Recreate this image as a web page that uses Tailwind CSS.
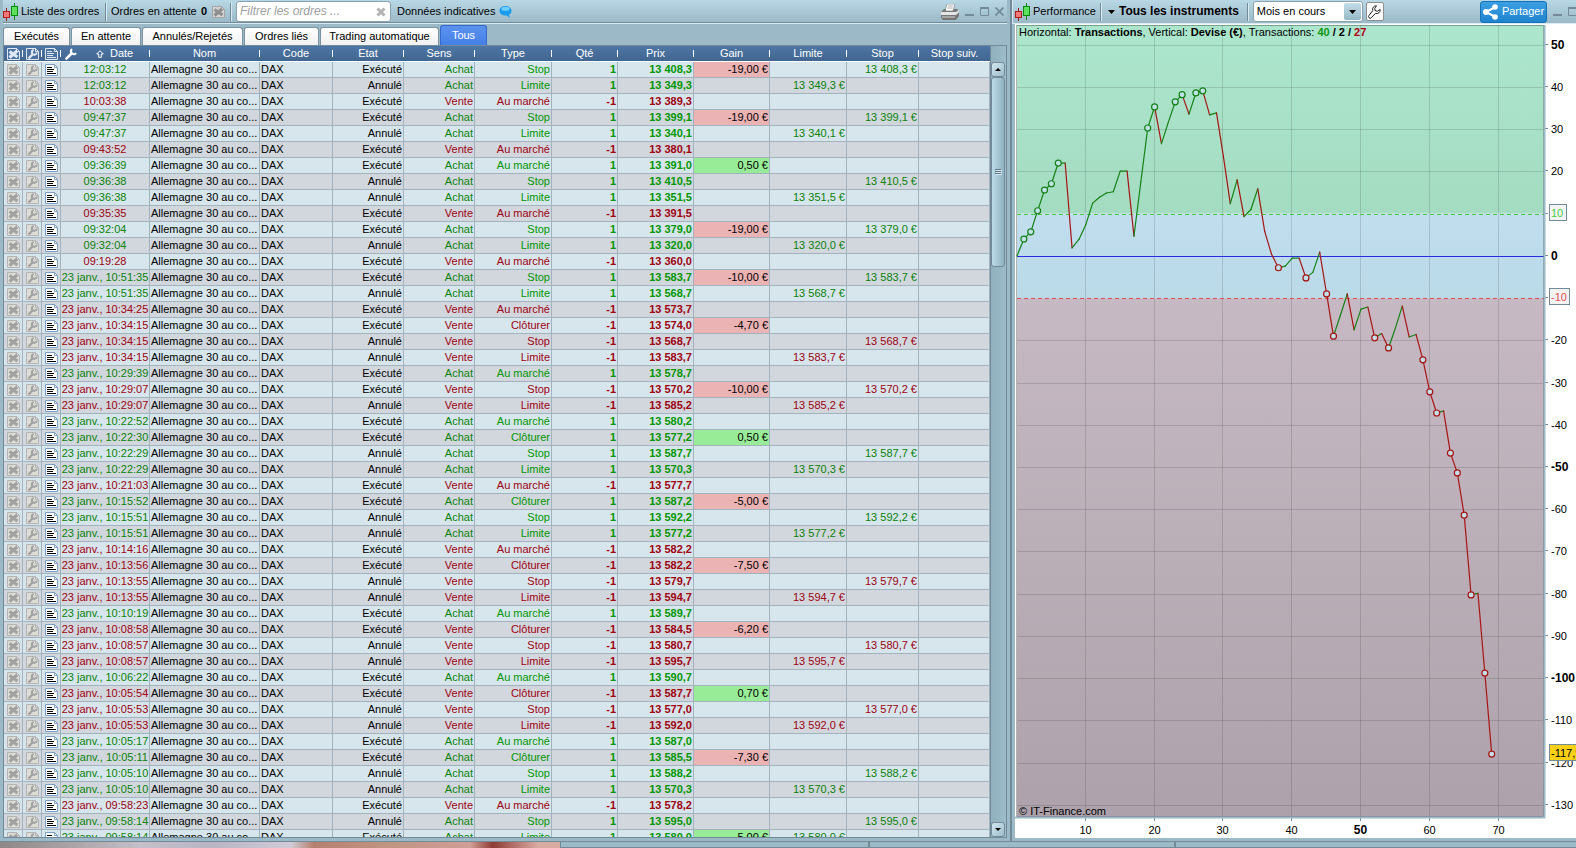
<!DOCTYPE html>
<html lang="fr">
<head>
  <meta charset="UTF-8" />
  <meta name="viewport" content="width=device-width, initial-scale=1.0" />
  <title>Liste des ordres</title>
  <script src="https://cdn.jsdelivr.net/npm/@tailwindcss/browser@4"></script>
</head>
<body class="h-screen flex flex-col overflow-hidden bg-[#9bb9c7] font-['Liberation_Sans',Arial,sans-serif] text-[11px] leading-[15px] text-black">

  <!-- Shared icons -->
  <svg class="hidden">
    <symbol id="candles" viewBox="0 0 16 18">
      <path d="M3.5 5v13" stroke="#a01818" />
      <rect x=".5" y="8.500" width="6" height="6" fill="#f07878" stroke="#b01c1c" />
      <path d="M11.500 0v17" stroke="#0a8a0a" />
      <rect x="8.500" y="3.500" width="6" height="9" fill="#5fe05f" stroke="#0a8a0a" />
    </symbol>
    <symbol id="cross" viewBox="0 0 13 12">
      <path d="M.5.500h9l3 3v8H.5z" fill="var(--paper)" stroke="var(--edge)" />
      <path d="M9.500.500v3h3" fill="none" stroke="var(--edge)" />
      <path d="M2.500 3.500l8 5.500M10 3L2.500 9.500" stroke="var(--ink)" stroke-width="3.200" />
    </symbol>
    <symbol id="spanner" viewBox="0 0 13 12">
      <path d="M.5.500h9l3 3v8H.5z" fill="var(--paper)" stroke="var(--edge)" />
      <path d="M9.500.500v3h3" fill="none" stroke="var(--edge)" />
      <path d="M2.500 10.500L7 6" stroke="var(--ink)" stroke-width="2.400" />
      <path d="M10.700 4.500A2.400 2.400 0 1 1 7.800 2" fill="none" stroke="var(--ink)" stroke-width="2" />
    </symbol>
    <symbol id="sheet" viewBox="0 0 13 12">
      <path d="M.5.500h9l3 3v8H.5z" fill="var(--paper)" stroke="var(--edge)" />
      <path d="M9.500.500v3h3" fill="none" stroke="var(--edge)" />
      <path d="M2 3.500h5M2 5.500h7M2 7.500h6M2 9.500h9" stroke="var(--ink)" />
    </symbol>
    <symbol id="wrench" viewBox="0 0 13 13">
      <path d="M1.500 11.500l5-5" stroke="currentColor" stroke-width="2.800" stroke-linecap="round" />
      <path d="M7.500 1a3 3 0 1 0 4.600 4.600" fill="none" stroke="currentColor" stroke-width="2.200" />
    </symbol>
  </svg>

  <main class="flex-1 min-h-0 grid grid-cols-[1010fr_566fr] border-b border-[#738b98]">

    <!-- Orders window -->
    <section class="min-w-0 min-h-0 flex flex-col pl-[3px] pr-[3px] pb-[3px]">
      <header class="h-6 shrink-0 flex items-center border-b border-[#d8eaf2] bg-linear-to-b from-[#b9d8e5] to-[#9ab8c6] whitespace-nowrap">
        <svg class="w-4 h-[18px]"><use href="#candles" /></svg>
        <h1 class="ml-[2px] w-[84px]">Liste des ordres</h1>
        <i class="w-[2px] h-[18px] border-l border-[#738b98] bg-[#d8eaf2]"></i>
        <span class="ml-1 w-[86px]">Ordres en attente</span>
        <b class="ml-1 w-2">0</b>
        <button class="ml-[3px] [--paper:#d5d5d5] [--edge:#a5a5a5] [--ink:#8e8e8e]" aria-label="Annuler les ordres">
          <svg class="w-[13px] h-3"><use href="#cross" /></svg>
        </button>
        <i class="ml-[5px] w-[2px] h-[18px] border-l border-[#738b98] bg-[#d8eaf2]"></i>
        <label class="ml-1 w-[155px] h-[21px] flex items-center rounded-[3px] border border-[#8ba2ae] bg-white pl-[3px] pr-1">
          <input type="text" aria-label="Filtrer les ordres" placeholder="Filtrer les ordres ..." class="min-w-0 flex-1 text-[12px] italic outline-none placeholder:text-[#a0a0a0]" />
          <svg class="w-[10px] h-[10px]" viewBox="0 0 10 10"><path d="M1.500 1.500l7 7M8.500 1.500l-7 7" stroke="#b4b4b4" stroke-width="3" /></svg>
        </label>
        <span class="ml-[6px]">Données indicatives</span>
        <svg class="ml-1 w-[13px] h-3" viewBox="0 0 13 12">
          <path d="M6.500 0C10 0 12.500 2 12.500 4.700c0 2-.9 3.300-2.500 4L11 12 7.500 9.400C3 9.800.5 7.500.5 4.700.5 2 3 0 6.500 0z" fill="#1a9cf0" />
          <ellipse cx="6.500" cy="2.800" rx="4.200" ry="2" fill="#6fd0ff" />
        </svg>
        <div class="ml-auto flex items-center gap-[6px] pr-[3px] text-[#738b98]">
          <button aria-label="Imprimer">
            <svg class="w-[18px] h-4" viewBox="0 0 18 16">
              <path d="M6 0h8l-2 7H4z" fill="#fff" stroke="#888" stroke-width=".7" />
              <path d="M7 2h5M6.500 4h5" stroke="#999" stroke-width=".8" />
              <path d="M0 8l3-3h2L4.500 7H12l.7-2H16l2 2v5l-3 4H2l-2-2z" fill="#777" />
              <path d="M0 8h15l3-2v2l-3 3H0z" fill="#e5e5e5" />
              <path d="M1 13h13" stroke="#d8d8d8" />
            </svg>
          </button>
          <button aria-label="Réduire"><svg class="w-[9px] h-[9px]" viewBox="0 0 9 9"><path d="M0 8h9" stroke="currentColor" stroke-width="2" /></svg></button>
          <button aria-label="Agrandir"><svg class="w-[9px] h-[9px]" viewBox="0 0 9 9"><path d="M.5 1h8v7.500h-8z" fill="none" stroke="currentColor" /><path d="M0 1h9" stroke="currentColor" stroke-width="2" /></svg></button>
          <button aria-label="Fermer"><svg class="w-[9px] h-[9px]" viewBox="0 0 9 9"><path d="M.5.500l8 8M8.500.500l-8 8" stroke="currentColor" stroke-width="1.800" /></svg></button>
        </div>
      </header>
      <hr class="-mt-[2px] border-[#738b98]" />

      <nav class="mt-[3px] h-[19px] shrink-0 flex items-end gap-px text-center whitespace-nowrap">
        <button class="h-[18px] w-[67px] rounded-t-[3px] border border-b-0 border-[#7b929f] bg-linear-to-b from-white to-[#f1f1f1]">Exécutés</button>
        <button class="h-[18px] w-[70px] rounded-t-[3px] border border-b-0 border-[#7b929f] bg-linear-to-b from-white to-[#f1f1f1]">En attente</button>
        <button class="h-[18px] w-[101px] rounded-t-[3px] border border-b-0 border-[#7b929f] bg-linear-to-b from-white to-[#f1f1f1]">Annulés/Rejetés</button>
        <button class="h-[18px] w-[75px] rounded-t-[3px] border border-b-0 border-[#7b929f] bg-linear-to-b from-white to-[#f1f1f1]">Ordres liés</button>
        <button class="h-[18px] w-[119px] rounded-t-[3px] border border-b-0 border-[#7b929f] bg-linear-to-b from-white to-[#f1f1f1]">Trading automatique</button>
        <button class="h-5 w-[47px] rounded-t-[3px] border border-b-0 border-[#3467c8] bg-linear-to-b from-[#5b93ee] to-[#4480e6] text-white">Tous</button>
      </nav>

      <div class="flex-1 min-h-0 flex border border-[#738b98]">
        <div class="flex-1 min-w-0 overflow-hidden">
          <table class="w-full table-fixed border-separate border-spacing-0 whitespace-nowrap">
            <colgroup>
              <col class="w-[19px]" /><col class="w-[19px]" /><col class="w-[19px]" /><col class="w-[89px]" />
              <col class="w-[110px]" /><col class="w-[73px]" /><col class="w-[71px]" /><col class="w-[71px]" />
              <col class="w-[77px]" /><col class="w-[66px]" /><col class="w-[76px]" /><col class="w-[76px]" />
              <col class="w-[77px]" /><col class="w-[72px]" /><col />
            </colgroup>
            <thead>
              <tr id="headRow" class="h-4 bg-linear-to-b from-[#4e76a4] to-[#40658f] text-white"></tr>
            </thead>
            <tbody id="orders"></tbody>
          </table>
        </div>

        <!-- Scrollbar -->
        <div class="w-4 shrink-0 flex flex-col pt-4 border-l border-[#738b98] bg-linear-to-r from-[#90b0be] to-[#9dbbc8]">
          <button class="h-[15px] w-[14px] rounded-[3px] border border-[#738b98] bg-linear-to-br from-[#d3e8f1] to-[#9cbccb] flex items-center justify-center" aria-label="Monter">
            <svg class="w-[6px] h-[3px]" viewBox="0 0 6 3"><path d="M3 0l3 3H0z" /></svg>
          </button>
          <div class="h-[190px] w-[14px] rounded-[3px] border border-[#738b98] bg-linear-to-r from-[#bcdbe8] to-[#91b2c1] flex items-center justify-center">
            <svg class="w-[7px] h-[6px]" viewBox="0 0 7 6"><path d="M0 .5h6M0 2.500h6M0 4.500h6" stroke="#5d7785" /><path d="M1 1.500h6M1 3.500h6M1 5.500h6" stroke="#d8eaf2" /></svg>
          </div>
          <button class="mt-auto h-[15px] w-[14px] rounded-[3px] border border-[#738b98] bg-linear-to-br from-[#d3e8f1] to-[#9cbccb] flex items-center justify-center" aria-label="Descendre">
            <svg class="w-[6px] h-[3px]" viewBox="0 0 6 3"><path d="M0 0h6L3 3z" /></svg>
          </button>
        </div>
      </div>
    </section>

    <!-- Performance window -->
    <section class="min-w-0 min-h-0 flex flex-col border-l-2 border-[#738b98] pb-[3px]">
      <header class="h-6 shrink-0 flex items-center border-b border-[#d8eaf2] border-l pl-[2px] bg-linear-to-b from-[#b9d8e5] to-[#9ab8c6] overflow-hidden whitespace-nowrap">
        <svg class="w-4 h-[18px] shrink-0"><use href="#candles" /></svg>
        <h2 class="ml-[2px] w-[67px]">Performance</h2>
        <i class="w-[2px] h-[18px] border-l border-[#738b98] bg-[#d8eaf2]"></i>
        <button class="ml-[6px] flex items-center gap-1 text-[12px] font-bold">
          <svg class="w-[7px] h-1" viewBox="0 0 7 4"><path d="M0 0h7L3.500 4z" /></svg>
          Tous les instruments
        </button>
        <i class="ml-2 w-[2px] h-[18px] border-l border-[#738b98] bg-[#d8eaf2]"></i>
        <label class="ml-1 w-[110px] h-[21px] shrink-0 flex items-center rounded-[3px] border border-[#8ba2ae] bg-white">
          <select class="min-w-0 flex-1 appearance-none pl-[3px] text-[11px] outline-none" aria-label="Période">
            <option>Mois en cours</option>
          </select>
          <span class="w-[17px] h-[17px] mr-px rounded-[2px] bg-linear-to-b from-[#c4dde8] to-[#96b7c6] flex items-center justify-center">
            <svg class="w-[7px] h-1" viewBox="0 0 7 4"><path d="M0 0h7L3.500 4z" /></svg>
          </span>
        </label>
        <button class="ml-[3px] w-[18px] h-[19px] shrink-0 rounded-[2px] border border-[#8f8f8f] bg-[#fafafa] flex items-center justify-center" aria-label="Réglages">
          <svg class="w-[13px] h-[14px]" viewBox="0 0 13 14">
            <path d="M8.500.800a3.500 3.500 0 0 0-3.700 4.700L1 10.500a1.500 1.500 0 0 0 2.300 2.200l4.200-4.300a3.500 3.500 0 0 0 4.600-4L9.500 6.300 7 5.500 6.800 3.200z" fill="#fff" stroke="#222" />
          </svg>
        </button>
        <div class="ml-auto flex items-center">
          <button class="w-[67px] h-[22px] rounded-[3px] border border-[#1371b8] bg-linear-to-b from-[#3b9fe2] to-[#1f84cf] flex items-center justify-center gap-1 text-white">
            <svg class="w-[15px] h-4" viewBox="0 0 15 16"><path d="M12.500 3L3 8l9.500 5" fill="none" stroke="#fff" stroke-width="2" /><circle cx="3" cy="8" r="3" fill="#fff" /><circle cx="12" cy="3" r="2.800" fill="#fff" /><circle cx="12" cy="13" r="2.800" fill="#fff" /></svg>
            Partager
          </button>
          <svg class="ml-[6px] w-[9px] h-[9px]" viewBox="0 0 9 9"><path d="M0 8h9" stroke="#738b98" stroke-width="2" /></svg>
          <svg class="ml-[6px] w-2 h-[9px]" viewBox="0 0 8 9"><path d="M8 1H.5v7.500H8" fill="none" stroke="#738b98" /><path d="M0 1h8" stroke="#738b98" stroke-width="2" /></svg>
        </div>
      </header>
      <div class="flex-1 min-h-0 ml-[3px] bg-white">
        <svg id="chart" class="block w-full h-full"></svg>
      </div>
    </section>
  </main>

  <!-- Edge of the windows below -->
  <footer class="h-[6px] shrink-0 grid grid-cols-[560fr_308fr_306fr_402fr]">
    <div class="bg-[linear-gradient(to_right,#8d8788,#a9a2a4_12%,#c4bfc8_25%,#b9b4c4_38%,#d0cbd6_52%,#b5806f_56%,#c29583_70%,#cf9e95_84%,#8e3b34_88%,#d8aaa0_96%)]"></div>
    <div class="border-b border-l border-[#738b98] bg-[#9bb9c7]"></div>
    <div class="border-b border-l-2 border-[#738b98] bg-[#9bb9c7]"></div>
    <div class="border-b border-l-2 border-[#738b98] bg-[#9bb9c7]"></div>
  </footer>

  <script>
    // date, état, sens, type, prix, gain
    const orders = [
      ["12:03:12", "E", "A", "Stop", "13 408,3", "-19,00"],
      ["12:03:12", "A", "A", "Limite", "13 349,3"],
      ["10:03:38", "E", "V", "Au marché", "13 389,3"],
      ["09:47:37", "E", "A", "Stop", "13 399,1", "-19,00"],
      ["09:47:37", "A", "A", "Limite", "13 340,1"],
      ["09:43:52", "E", "V", "Au marché", "13 380,1"],
      ["09:36:39", "E", "A", "Au marché", "13 391,0", "0,50"],
      ["09:36:38", "A", "A", "Stop", "13 410,5"],
      ["09:36:38", "A", "A", "Limite", "13 351,5"],
      ["09:35:35", "E", "V", "Au marché", "13 391,5"],
      ["09:32:04", "E", "A", "Stop", "13 379,0", "-19,00"],
      ["09:32:04", "A", "A", "Limite", "13 320,0"],
      ["09:19:28", "E", "V", "Au marché", "13 360,0"],
      ["23 janv., 10:51:35", "E", "A", "Stop", "13 583,7", "-10,00"],
      ["23 janv., 10:51:35", "A", "A", "Limite", "13 568,7"],
      ["23 janv., 10:34:25", "E", "V", "Au marché", "13 573,7"],
      ["23 janv., 10:34:15", "E", "V", "Clôturer", "13 574,0", "-4,70"],
      ["23 janv., 10:34:15", "A", "V", "Stop", "13 568,7"],
      ["23 janv., 10:34:15", "A", "V", "Limite", "13 583,7"],
      ["23 janv., 10:29:39", "E", "A", "Au marché", "13 578,7"],
      ["23 janv., 10:29:07", "E", "V", "Stop", "13 570,2", "-10,00"],
      ["23 janv., 10:29:07", "A", "V", "Limite", "13 585,2"],
      ["23 janv., 10:22:52", "E", "A", "Au marché", "13 580,2"],
      ["23 janv., 10:22:30", "E", "A", "Clôturer", "13 577,2", "0,50"],
      ["23 janv., 10:22:29", "A", "A", "Stop", "13 587,7"],
      ["23 janv., 10:22:29", "A", "A", "Limite", "13 570,3"],
      ["23 janv., 10:21:03", "E", "V", "Au marché", "13 577,7"],
      ["23 janv., 10:15:52", "E", "A", "Clôturer", "13 587,2", "-5,00"],
      ["23 janv., 10:15:51", "A", "A", "Stop", "13 592,2"],
      ["23 janv., 10:15:51", "A", "A", "Limite", "13 577,2"],
      ["23 janv., 10:14:16", "E", "V", "Au marché", "13 582,2"],
      ["23 janv., 10:13:56", "E", "V", "Clôturer", "13 582,2", "-7,50"],
      ["23 janv., 10:13:55", "A", "V", "Stop", "13 579,7"],
      ["23 janv., 10:13:55", "A", "V", "Limite", "13 594,7"],
      ["23 janv., 10:10:19", "E", "A", "Au marché", "13 589,7"],
      ["23 janv., 10:08:58", "E", "V", "Clôturer", "13 584,5", "-6,20"],
      ["23 janv., 10:08:57", "A", "V", "Stop", "13 580,7"],
      ["23 janv., 10:08:57", "A", "V", "Limite", "13 595,7"],
      ["23 janv., 10:06:22", "E", "A", "Au marché", "13 590,7"],
      ["23 janv., 10:05:54", "E", "V", "Clôturer", "13 587,7", "0,70"],
      ["23 janv., 10:05:53", "A", "V", "Stop", "13 577,0"],
      ["23 janv., 10:05:53", "A", "V", "Limite", "13 592,0"],
      ["23 janv., 10:05:17", "E", "A", "Au marché", "13 587,0"],
      ["23 janv., 10:05:11", "E", "A", "Clôturer", "13 585,5", "-7,30"],
      ["23 janv., 10:05:10", "A", "A", "Stop", "13 588,2"],
      ["23 janv., 10:05:10", "A", "A", "Limite", "13 570,3"],
      ["23 janv., 09:58:23", "E", "V", "Au marché", "13 578,2"],
      ["23 janv., 09:58:14", "A", "A", "Stop", "13 595,0"],
      ["23 janv., 09:58:14", "E", "A", "Limite", "13 580,0", "5,00"]
    ];

    // Header
    const tick = `<i class="w-px h-[7px] bg-white"></i>`;
    const icon = (name) => `<svg class="w-[13px] h-3"><use href="#${name}" /></svg>`;
    const dateHead = `
      <span class="flex-1 flex items-center pl-1">
        <svg class="w-3 h-3"><use href="#wrench" /></svg>
        <svg class="ml-[19px] w-2 h-2" viewBox="0 0 8 8"><path d="M4 .7L7.300 4H5.300v3.300H2.700V4H.7z" fill="none" stroke="#fff" /></svg>
        <span class="ml-[6px]">Date</span>
      </span>`;
    const heads = ["cross", "spanner", "sheet"].map(n => `<span class="flex-1 pl-[3px] [--paper:#4a719f] [--edge:#dfe8f2] [--ink:#dfe8f2]">${icon(n)}</span>`)
      .concat(dateHead)
      .concat(["Nom", "Code", "Etat", "Sens", "Type", "Qté", "Prix", "Gain", "Limite", "Stop", "Stop suiv."].map(t => `<span class="flex-1 text-center">${t}</span>`));
    document.getElementById("headRow").innerHTML = heads.map((h, i) =>
      `<th class="p-0 font-normal border-b border-white"><div class="flex items-center h-[15px]">${h}${i < heads.length - 1 ? tick : ""}</div></th>`
    ).join("");

    // Rows
    const cell = "h-4 p-0 pr-px border-r border-b border-[#a3b3bd] text-right";
    const iconCell = "h-4 p-0 pl-[3px] border-r border-b border-[#a3b3bd]";
    const rowButton = (name, label, tone) => `<td class="${iconCell}"><button class="block ${tone}" aria-label="${label}">${icon(name)}</button></td>`;
    const grey = "[--paper:#deded8] [--edge:#b4b4b4] [--ink:#a2a2a2]";
    const blue = "[--paper:#ffffff] [--edge:#7d9fc4] [--ink:#000000]";

    document.getElementById("orders").innerHTML = orders.map(([date, state, side, type, price, gain]) => {
      const tone = side === "A" ? "text-[#0a820a]" : "text-[#a00010]";
      const strong = side === "A" ? "text-[#009600]" : "text-[#a00010]";
      const gainBg = !gain ? "" : gain[0] === "-" ? "bg-[#ebb3b3]" : "bg-[#98ec98]";
      return `<tr class="odd:bg-[#d7e6ed] even:bg-[#d1d7dd]">
        ${rowButton("cross", "Annuler", grey)}
        ${rowButton("spanner", "Modifier", grey)}
        ${rowButton("sheet", "Détails", blue)}
        <td class="h-4 p-0 border-r border-b border-[#a3b3bd] text-center ${tone}">${date}</td>
        <td class="h-4 p-0 pl-px border-r border-b border-[#a3b3bd]">Allemagne 30 au co...</td>
        <td class="h-4 p-0 pl-px border-r border-b border-[#a3b3bd]">DAX</td>
        <td class="${cell}">${state === "E" ? "Exécuté" : "Annulé"}</td>
        <td class="${cell} ${tone}">${side === "A" ? "Achat" : "Vente"}</td>
        <td class="${cell} ${strong}">${type}</td>
        <td class="${cell} ${strong} font-bold">${side === "A" ? "1" : "-1"}</td>
        <td class="${cell} ${strong} font-bold">${price}</td>
        <td class="${cell} ${gainBg}">${gain ? gain + " €" : ""}</td>
        <td class="${cell} ${tone}">${type === "Limite" ? price + " €" : ""}</td>
        <td class="${cell} ${tone}">${type === "Stop" ? price + " €" : ""}</td>
        <td class="${cell}"></td>
      </tr>`;
    }).join("");

    // Cumulated result after each transaction
    const results = [
      0, 4, 5.7, 10.7, 15.6, 17.1, 22, 22, 1.9, 3.9, 7.4, 12.5, 13.9, 14.9, 15.2, 20.1, 20.1, 4.7, 17.5, 30.3,
      35.3, 26.6, 31.7, 36.5, 38.2, 33.6, 38.6, 39.1, 33.4, 33.9, 23.6, 12.4, 18, 9.3, 11, 15.9, 5.8, 0.4, -2.8, -2.4,
      -0.5, -0.5, -5.2, -3.9, 0.9, -9, -19, -14.1, -9, -17.5, -12.6, -12.1, -19.4, -18.4, -21.8, -17.1, -11.9, -19.2, -18.6, -24.6,
      -32.2, -37.2, -36.7, -46.7, -51.4, -61.4, -80.3, -79.9, -98.8, -118
    ];
    // Transactions marked with a dot
    const marked = [1, 2, 3, 4, 5, 6, 19, 20, 23, 24, 26, 27, 38, 42, 45, 46, 52, 54, 59, 60, 61, 63, 64, 65, 66, 68, 69];

    const chart = document.getElementById("chart");

    function drawChart() {
      const { width: W, height: H } = chart.parentElement.getBoundingClientRect();
      const left = 2, top = 1, right = Math.round(W) - 32, bottom = Math.round(H) - 21;
      const maxY = 54.7, minY = -132.9;
      const x = n => left + n * (right - left) / 76.6;
      const y = v => top + (maxY - v) * (bottom - top) / (maxY - minY);
      const label = v => v % 50 ? `font-size="11"` : `font-size="12" font-weight="700"`;
      let s = `
        <defs>
          <linearGradient id="gain" x2="0" y2="1"><stop stop-color="#ace6cc" /><stop offset="1" stop-color="#a4dcc2" /></linearGradient>
          <linearGradient id="flat" x2="0" y2="1"><stop stop-color="#c0deee" /><stop offset="1" stop-color="#badae8" /></linearGradient>
          <linearGradient id="loss" x2="0" y2="1"><stop stop-color="#c6b9c3" /><stop offset="1" stop-color="#ada2ab" /></linearGradient>
        </defs>
        <rect x="${left}" y="${top}" width="${right - left}" height="${y(10) - top}" fill="url(#gain)" />
        <rect x="${left}" y="${y(10)}" width="${right - left}" height="${y(-10) - y(10)}" fill="url(#flat)" />
        <rect x="${left}" y="${y(-10)}" width="${right - left}" height="${bottom - y(-10)}" fill="url(#loss)" />`;

      for (let v = 50; v >= -130; v -= 10) {
        const py = Math.round(y(v)) + 0.5;
        if (v !== 0 && Math.abs(v) !== 10) s += `<path d="M${left} ${py}H${right}" stroke="#000" stroke-opacity=".13" />`;
        s += `<path d="M${right} ${py - 1}h4" stroke="#738b98" />`;
        if (Math.abs(v) !== 10) s += `<text x="${right + 7}" y="${py + 3}" ${label(v)}>${v}</text>`;
      }
      for (let n = 10; n <= 70; n += 10) {
        const px = Math.round(x(n)) - 0.5;
        s += `<path d="M${px} ${top}V${bottom}" stroke="#000" stroke-opacity=".13" />
          <path d="M${px} ${bottom}v4" stroke="#738b98" />
          <text x="${px}" y="${bottom + 17}" text-anchor="middle" ${label(n)}>${n}</text>`;
      }

      // Thresholds
      s += `
        <path d="M${left} ${Math.round(y(10)) + 0.5}H${right}" stroke="#46c846" stroke-dasharray="4 3" />
        <path d="M${left} ${Math.round(y(-10)) + 0.5}H${right}" stroke="#e05050" stroke-dasharray="4 3" />
        <path d="M${left} ${Math.round(y(0)) + 0.5}H${right}" stroke="#2a2adf" />
        <rect x="${right + 5.5}" y="${Math.round(y(10)) - 9.5}" width="17" height="16" fill="#f4f4f4" stroke="#738b98" />
        <text x="${right + 7}" y="${Math.round(y(10)) + 3}" fill="#46d046">10</text>
        <rect x="${right + 5.5}" y="${Math.round(y(-10)) - 9.5}" width="20" height="16" fill="#f4f4f4" stroke="#738b98" />
        <text x="${right + 7}" y="${Math.round(y(-10)) + 3}" fill="#e05050">-10</text>
        <rect x="${right + 5.5}" y="${Math.round(y(-118)) - 9.5}" width="40" height="16" fill="#f8d018" stroke="#738b98" />
        <text x="${right + 7}" y="${Math.round(y(-118)) + 3}">-117,9</text>
        <rect x="${left - 0.5}" y="${top + 0.5}" width="${right - left}" height="${bottom - top - 1}" fill="none" stroke="#000" stroke-opacity=".3" />
        <path d="M${right + 0.5} ${top}V${bottom + 0.5}H0" fill="none" stroke="#9bb9c7" stroke-width="2" />`;

      // Curve
      for (let n = 1; n < results.length; n++) {
        const up = results[n] >= results[n - 1];
        s += `<path d="M${x(n - 1)} ${y(results[n - 1])}L${x(n)} ${y(results[n])}" stroke="${up ? "#148214" : "#a81414"}" stroke-width="1.200" stroke-linecap="round" />`;
      }
      marked.forEach(n => {
        s += `<circle cx="${x(n)}" cy="${y(results[n])}" r="3" fill="#c0e0ea" stroke="${results[n] > 0 ? "#148214" : "#a81414"}" stroke-width="1.200" />`;
      });

      s += `
        <text x="${left + 2}" y="${top + 11}">Horizontal: <tspan font-weight="700">Transactions</tspan>, Vertical: <tspan font-weight="700">Devise (€)</tspan>, Transactions: <tspan font-weight="700" fill="#109610">40</tspan><tspan font-weight="700"> / 2 / </tspan><tspan font-weight="700" fill="#b00010">27</tspan></text>
        <text x="${left + 2}" y="${bottom - 2}">© IT-Finance.com</text>`;
      chart.innerHTML = s;
    }

    // Redraw whenever the panel gets its size
    new ResizeObserver(drawChart).observe(chart.parentElement);
    window.addEventListener("load", drawChart);
  </script>
</body>
</html>
